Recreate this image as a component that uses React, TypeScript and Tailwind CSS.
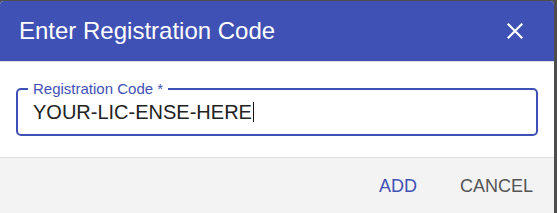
import React from "react";

export default function App() {
  return (
    <div
      className="w-[557px] h-[213px] bg-[#4d4d4d] pt-px overflow-hidden"
      style={{ fontFamily: '"Liberation Sans", Arial, sans-serif' }}
    >
      <div className="w-[554px] h-[240px] flex flex-col bg-white rounded-t-[4px] overflow-hidden">
        <div className="h-[60px] shrink-0 bg-[#3f51b5] flex items-center justify-between pl-[19px] pr-[31px]">
          <h2 className="text-[24px] leading-none text-white font-normal">Enter Registration Code</h2>
          <svg width="16" height="16" viewBox="0 0 16 16" className="mt-[-1px]">
            <path d="M1.5 1.5 L14.5 14.5 M14.5 1.5 L1.5 14.5" stroke="white" strokeWidth="2.2" strokeLinecap="square" />
          </svg>
        </div>
        <div className="h-px bg-[#dcdcdc]" />
        <div className="h-[95px] shrink-0 px-[16px] pt-[19px]">
          <fieldset className="border-2 border-[#3f51b5] rounded-[5px] h-[55px] pl-[10px] pr-3 m-0 min-w-0">
            <legend className="px-[5px] text-[15px] leading-[15px] text-[#3f51b5]">
              Registration Code *
            </legend>
            <div className="flex items-center h-[30px] mt-[1px] pl-[5px]">
              <span className="text-[20px] leading-none text-[#222]">YOUR-LIC-ENSE-HERE</span>
              <span className="w-px h-[20px] bg-[#111] ml-px" />
            </div>
          </fieldset>
        </div>
        <div className="h-px bg-[#dedede]" />
        <div className="flex-1 bg-[#f3f3f3] flex justify-end items-start pt-[19px] pr-[21px] gap-[43px]">
          <span className="text-[18px] leading-none text-[#3f51b5]">ADD</span>
          <span className="text-[18px] leading-none text-[#555]">CANCEL</span>
        </div>
      </div>
    </div>
  );
}
